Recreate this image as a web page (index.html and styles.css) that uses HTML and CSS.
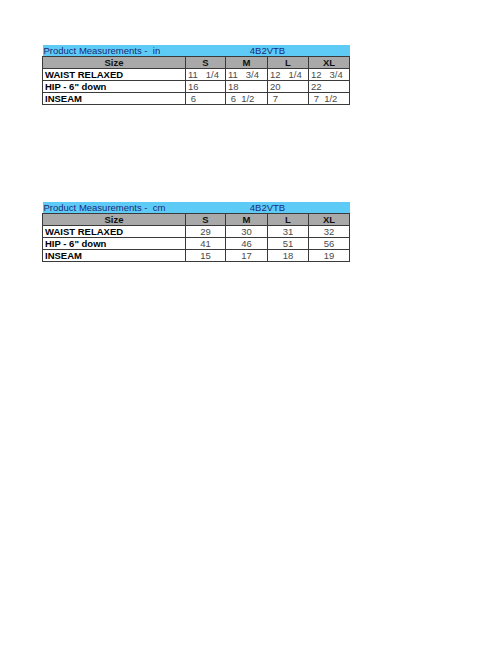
FILE: index.html
```html
<!DOCTYPE html>
<html>
<head>
<meta charset="utf-8">
<link rel="stylesheet" href="styles.css">
</head>
<body>
<div class="page">
  <table class="sheet">
    <colgroup><col class="c-label"><col class="c-s"><col class="c-m"><col class="c-l"><col class="c-xl"></colgroup>
    <tr class="title"><td>Product Measurements -&nbsp; in</td><td colspan="4" class="code">4B2VTB</td></tr>
    <tr class="head"><th>Size</th><th>S</th><th>M</th><th>L</th><th>XL</th></tr>
    <tr><td class="lbl">WAIST RELAXED</td><td class="v">11   1/4</td><td class="v">11   3/4</td><td class="v">12   1/4</td><td class="v">12   3/4</td></tr>
    <tr><td class="lbl">HIP - 6" down</td><td class="v">16</td><td class="v">18</td><td class="v">20</td><td class="v">22</td></tr>
    <tr><td class="lbl">INSEAM</td><td class="v"> 6</td><td class="v"> 6  1/2</td><td class="v"> 7</td><td class="v"> 7  1/2</td></tr>
  </table>

  <table class="sheet second">
    <colgroup><col class="c-label"><col class="c-s"><col class="c-m"><col class="c-l"><col class="c-xl"></colgroup>
    <tr class="title"><td>Product Measurements -&nbsp; cm</td><td colspan="4" class="code">4B2VTB</td></tr>
    <tr class="head"><th>Size</th><th>S</th><th>M</th><th>L</th><th>XL</th></tr>
    <tr><td class="lbl">WAIST RELAXED</td><td class="n">29</td><td class="n">30</td><td class="n">31</td><td class="n">32</td></tr>
    <tr><td class="lbl">HIP - 6" down</td><td class="n">41</td><td class="n">46</td><td class="n">51</td><td class="n">56</td></tr>
    <tr><td class="lbl">INSEAM</td><td class="n">15</td><td class="n">17</td><td class="n">18</td><td class="n">19</td></tr>
  </table>
</div>
</body>
</html>
```
FILE: styles.css
```css
html, body {
  margin: 0;
  padding: 0;
  background: #ffffff;
}
.page {
  padding: 45px 0 0 42px;
  font-family: "Liberation Sans", Arial, sans-serif;
}
.sheet {
  border-collapse: collapse;
  table-layout: fixed;
  width: 307px;
  font-size: 9.5px;
  line-height: 11px;
}
.second {
  margin-top: 97px;
}
.c-label { width: 143px; }
.c-s { width: 40px; }
.c-m { width: 42px; }
.c-l { width: 41px; }
.c-xl { width: 41px; }
.sheet td, .sheet th {
  height: 11px;
  padding: 0 2px;
  overflow: hidden;
  white-space: pre;
  border: 1px solid #3a3a3a;
}
.title td {
  background: #5ecbf7;
  color: #1a2b78;
  border: none;
  border-bottom: 1px solid #3a3a3a;
  padding: 0 1px;
}
.title .code {
  text-align: center;
}
.head th {
  background: #a9a9a9;
  color: #111;
  font-weight: bold;
  text-align: center;
  border: 1px solid #3a3a3a;
}
.lbl {
  font-weight: bold;
  color: #000;
  padding-left: 0;
}
.v {
  color: #4a4a4a;
  text-align: left;
}
.n {
  color: #4a4a4a;
  text-align: center;
}
```
